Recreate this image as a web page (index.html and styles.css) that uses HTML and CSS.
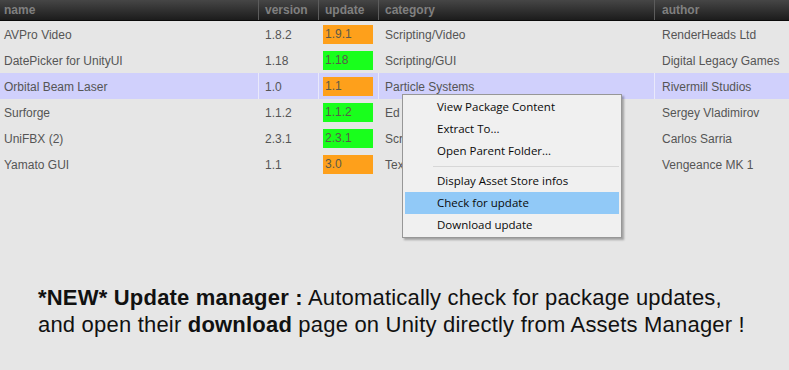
FILE: index.html
```html
<!DOCTYPE html>
<html lang="en">
<head>
  <meta charset="UTF-8">
  <title>Assets Manager - Update manager</title>
  <link rel="stylesheet" href="styles.css">
</head>
<body>
  <div class="packages">
    <!-- Column headers -->
    <div class="row head">
      <div class="cell">name</div>
      <div class="cell">version</div>
      <div class="cell">update</div>
      <div class="cell">category</div>
      <div class="cell">author</div>
    </div>

    <div class="row">
      <div class="cell">AVPro Video</div>
      <div class="cell">1.8.2</div>
      <div class="cell"><span class="badge old">1.9.1</span></div>
      <div class="cell">Scripting/Video</div>
      <div class="cell">RenderHeads Ltd</div>
    </div>
    <div class="row">
      <div class="cell">DatePicker for UnityUI</div>
      <div class="cell">1.18</div>
      <div class="cell"><span class="badge ok">1.18</span></div>
      <div class="cell">Scripting/GUI</div>
      <div class="cell">Digital Legacy Games</div>
    </div>
    <div class="row selected">
      <div class="cell">Orbital Beam Laser</div>
      <div class="cell">1.0</div>
      <div class="cell"><span class="badge old">1.1</span></div>
      <div class="cell">Particle Systems</div>
      <div class="cell">Rivermill Studios</div>
    </div>
    <div class="row">
      <div class="cell">Surforge</div>
      <div class="cell">1.1.2</div>
      <div class="cell"><span class="badge ok">1.1.2</span></div>
      <div class="cell">Ed</div>
      <div class="cell">Sergey Vladimirov</div>
    </div>
    <div class="row">
      <div class="cell">UniFBX (2)</div>
      <div class="cell">2.3.1</div>
      <div class="cell"><span class="badge ok">2.3.1</span></div>
      <div class="cell">Scr</div>
      <div class="cell">Carlos Sarria</div>
    </div>
    <div class="row">
      <div class="cell">Yamato GUI</div>
      <div class="cell">1.1</div>
      <div class="cell"><span class="badge old">3.0</span></div>
      <div class="cell">Tex</div>
      <div class="cell">Vengeance MK 1</div>
    </div>

    <!-- Right click menu on the selected package -->
    <ul class="context-menu">
      <li>View Package Content</li>
      <li>Extract To...</li>
      <li>Open Parent Folder...</li>
      <li class="separator"></li>
      <li>Display Asset Store infos</li>
      <li class="hover">Check for update</li>
      <li>Download update</li>
    </ul>
  </div>

  <p class="caption">
    <b>*NEW* Update manager :</b> Automatically check for package updates,<br>
    and open their <b>download</b> page on Unity directly from Assets Manager !
  </p>
</body>
</html>
```

FILE: styles.css
```css
/* General Styles */
body {
  margin: 0;
  font-family: "Liberation Sans", Arial, sans-serif;
  background-color: #e6e6e6;
  color: #555555;
}

.packages {
  position: relative;
}

/* Rows */
.row {
  display: grid;
  grid-template-columns: 259px 60px 60px 276px 1fr;
  height: 26px;
  align-items: stretch;
  font-size: 12px;
}

.row .cell {
  display: flex;
  align-items: center;
  padding-top: 1px;
  padding-left: 4px;
  border-right: 1px solid transparent;
  white-space: nowrap;
  overflow: hidden;
}

.row .cell:nth-child(2) { padding-left: 6px; }
.row .cell:nth-child(3) { padding-left: 4px; }
.row .cell:nth-child(4) { padding-left: 6px; }
.row .cell:nth-child(5) { padding-left: 7px; border-right: none; }

.row.head {
  height: 20px;
  border-bottom: 1px solid #0a0a0a;
  background: linear-gradient(#464646, #1c1c1c);
  color: #808080;
  font-weight: bold;
  font-size: 12px;
}

.row.head .cell {
  padding-top: 0;
  border-right-color: #5c5c5c;
}

.row.head .cell:nth-child(3) { padding-left: 6px; }

.row.selected {
  background-color: #d0d0fc;
}

.row.selected .cell {
  border-right-color: #e9e9fb;
}

/* Update badge */
.badge {
  display: block;
  width: 48px;
  height: 19px;
  line-height: 19px;
  padding-left: 2px;
  color: #5a5a4a;
}

.badge.old {
  background-color: #fea01b;
}

.badge.ok {
  background-color: #19ff1c;
}

/* Context menu */
.context-menu {
  position: absolute;
  left: 402px;
  top: 94px;
  width: 214px;
  margin: 0;
  padding: 1px 2px;
  list-style: none;
  background-color: #f0f0f0;
  border: 1px solid #979797;
  box-shadow: 2px 2px 2px rgba(0, 0, 0, 0.3);
  font-family: "Open Sans", "Noto Sans", sans-serif;
  font-size: 11.5px;
  color: #0a0a0a;
}

.context-menu li {
  height: 22px;
  line-height: 22px;
  padding-left: 32px;
}

.context-menu li.hover {
  background-color: #91c9f7;
}

.context-menu li.separator {
  height: 1px;
  margin: 4px 0 3px 28px;
  padding: 0;
  background-color: #d7d7d7;
}

/* Caption */
.caption {
  margin: 107px 0 0 38px;
  font-size: 22px;
  line-height: 27px;
  letter-spacing: 0.2px;
  color: #111111;
}
```
